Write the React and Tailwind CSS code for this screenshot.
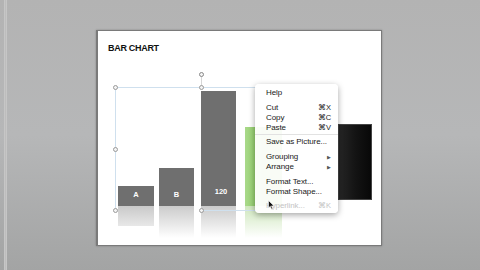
const menuFont = { fontFamily: '"Liberation Sans", Arial, sans-serif' }

function Handle({ className }) {
  return <div className={`absolute w-[5px] h-[5px] rounded-full border border-[#9a9a9a] bg-[#f4f4f4] ${className}`} />
}

function MenuItem({ label, shortcut, arrow, disabled }) {
  return (
    <div className={`flex items-center justify-between h-[10px] pl-[11px] pr-[7px] ${disabled ? 'text-[#c4c4c4]' : 'text-[#1a1a1a]'}`}>
      <span>{label}</span>
      {shortcut && <span className="text-[7.5px]">{shortcut}</span>}
      {arrow && <span className="text-[5px] text-[#555]">▶</span>}
    </div>
  )
}

function Bar({ w, h, label, className = '' }) {
  return (
    <div
      className={`flex items-end justify-center pb-[7px] bg-[#6f6f6f] text-white text-[7.5px] leading-[8px] font-bold ${className}`}
      style={{ width: w, height: h }}
    >
      {label}
    </div>
  )
}

export default function App() {
  return (
    <div className="w-[480px] h-[270px] overflow-hidden flex bg-gradient-to-b from-[#b3b3b3] via-[#b6b7b8] to-[#a3a4a4]">
      <div className="w-[3px] ml-[4px] h-full bg-[#bdbdbd] border-x border-[#c6c6c6]" />
      <div
        className="relative mt-[30px] ml-[89px] w-[286px] h-[216px] bg-white border border-[#7a7a7a] border-l-2 shadow-[0_0_2px_rgba(0,0,0,0.25)]"
        style={{ fontFamily: '"Liberation Sans", Arial, sans-serif' }}
      >
        <div className="pl-[10px] pt-[12px] h-[24px] text-[9px] leading-[10px] tracking-[-0.3px] text-[#111]">
          <span className="font-semibold">BAR </span>
          <span className="font-bold">CHART</span>
        </div>

        {/* bars */}
        <div className="flex items-end h-[151px] pl-[20px]">
          <Bar w={36} h={20} label="A" />
          <Bar w={35} h={38} label="B" className="ml-[5px]" />
          <Bar w={35} h={115} label="120" className="ml-[7px] pb-[10px] pl-[5px]" />
          <div className="ml-[9px] w-[37px] h-[79px] bg-gradient-to-r from-[#a9d98a] via-[#86c758] to-[#7fc14f]" />
          <div className="ml-[56px] mb-[6px] w-[34px] h-[76px] bg-gradient-to-r from-[#262626] via-[#141414] to-[#080808] border border-[#444]" />
        </div>

        {/* reflections */}
        <div className="flex items-start pl-[20px]">
          <div className="w-[36px] h-[20px] bg-gradient-to-b from-[#c9c9c9] to-[#e8e8e8]" />
          <div className="ml-[5px] w-[35px] h-[32px] bg-gradient-to-b from-[#cbcbcb] to-white" />
          <div className="ml-[7px] w-[35px] h-[32px] bg-gradient-to-b from-[#cbcbcb] to-white" />
          <div className="ml-[9px] w-[37px] h-[32px] bg-gradient-to-b from-[#cfe7bd] to-white" />
        </div>

        {/* selection frame */}
        <div className="absolute left-[17px] top-[56px] w-[142px] h-[123px] border-t border-l border-[#cfe0ee]" />
        <div className="absolute left-[103px] top-[179px] w-[56px] border-t border-[#cfe0ee]" />
        <div className="absolute left-[103px] top-[45px] h-[11px] border-l border-[#d6d6d6]" />
        <Handle className="left-[15px] top-[54px]" />
        <Handle className="left-[15px] top-[116px]" />
        <Handle className="left-[15px] top-[177px]" />
        <Handle className="left-[101px] top-[54px]" />
        <Handle className="left-[101px] top-[177px]" />
        <Handle className="left-[101px] top-[41px] border-[#888]" />

        {/* context menu */}
        <div
          className="absolute left-[157px] top-[53px] w-[83px] h-[129px] bg-white/95 rounded-[4px] shadow-[0_2px_6px_rgba(0,0,0,0.35)] pt-[4px] text-[8px] leading-[10px] tracking-[-0.1px]"
          style={menuFont}
        >
          <MenuItem label="Help" />
          <div className="h-[5px]" />
          <MenuItem label="Cut" shortcut="⌘X" />
          <MenuItem label="Copy" shortcut="⌘C" />
          <MenuItem label="Paste" shortcut="⌘V" />
          <div className="mt-[1px] mb-[2px] border-t border-[#e2e2e2]" />
          <MenuItem label="Save as Picture..." />
          <div className="h-[5px]" />
          <MenuItem label="Grouping" arrow />
          <MenuItem label="Arrange" arrow />
          <div className="h-[5px]" />
          <MenuItem label="Format Text..." />
          <MenuItem label="Format Shape..." />
          <div className="h-[4px]" />
          <MenuItem label="Hyperlink..." shortcut="⌘K" disabled />
        </div>

        {/* cursor */}
        <svg className="absolute left-[170px] top-[169px]" width="7" height="10" viewBox="0 0 7 10">
          <path d="M0.5 0.5 L0.5 8 L2.3 6.3 L3.6 9.3 L4.8 8.8 L3.5 5.9 L6 5.9 Z" fill="#111" stroke="#fff" strokeWidth="0.6" />
        </svg>
      </div>
    </div>
  )
}
